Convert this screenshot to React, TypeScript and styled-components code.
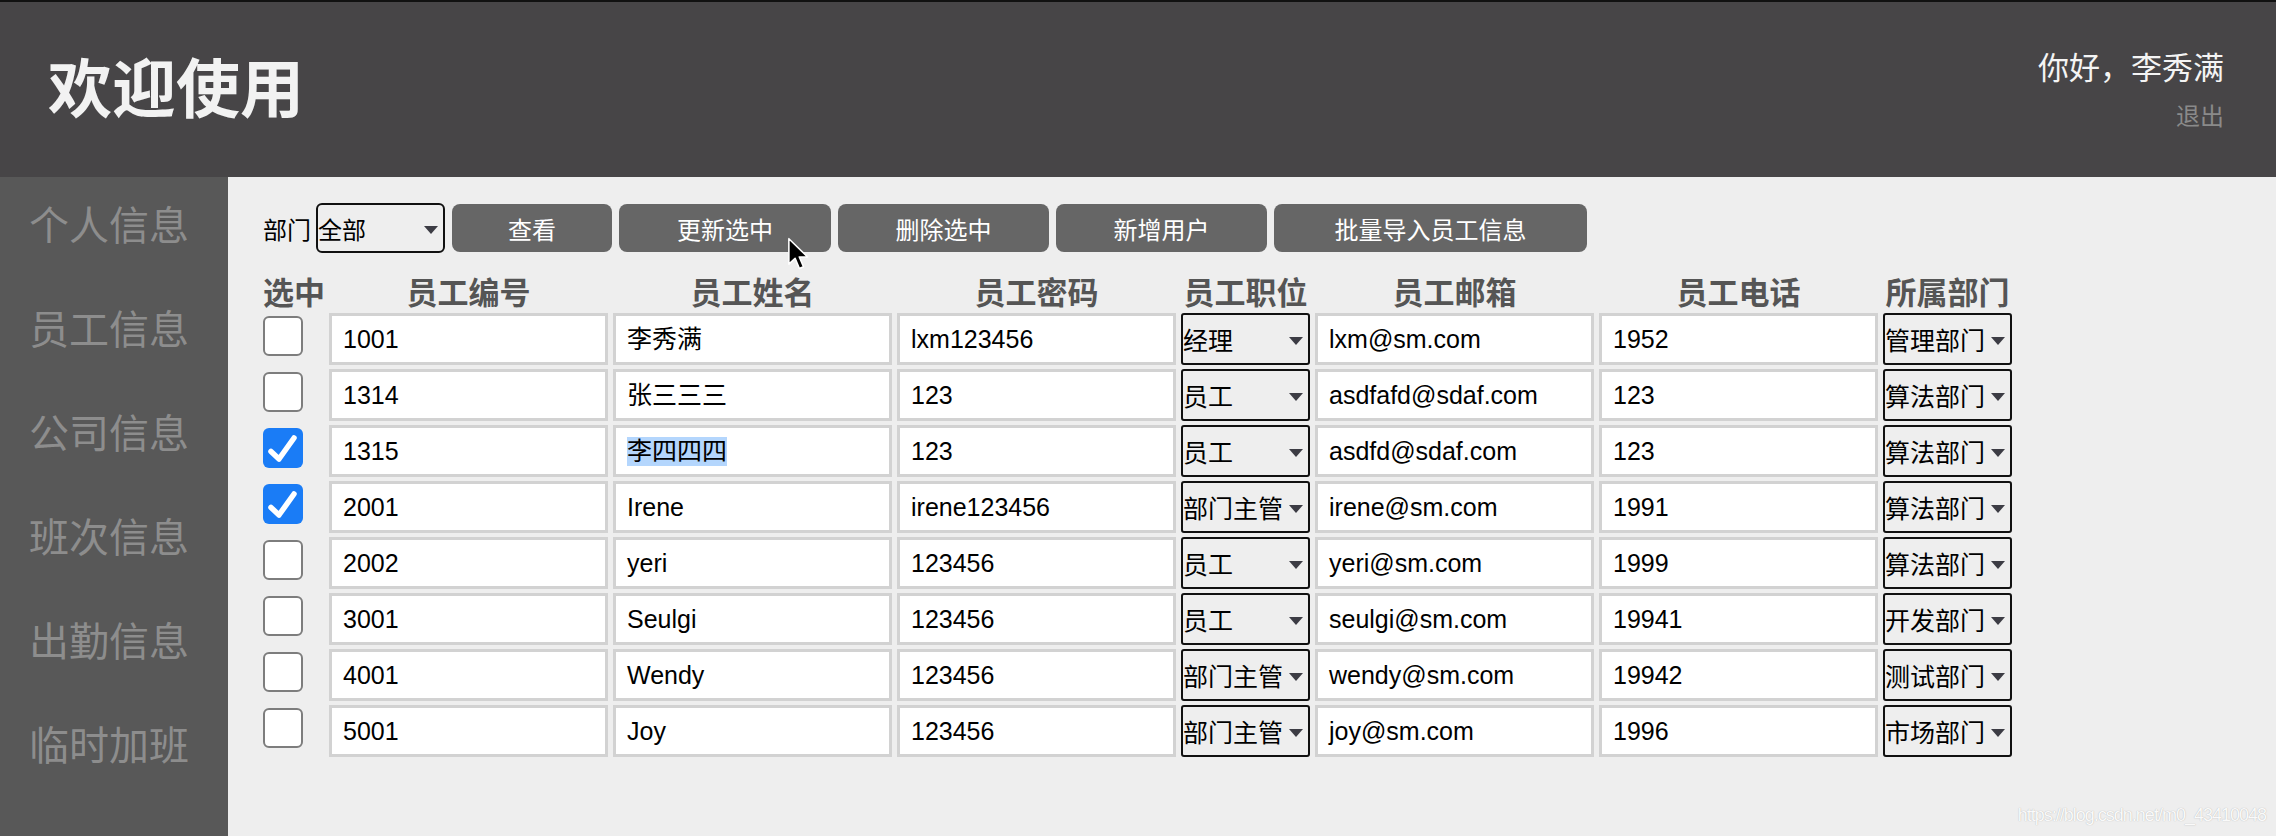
import React from 'react';
import styled, { createGlobalStyle } from 'styled-components';

const GlobalStyle = createGlobalStyle`
  html, body {
    margin: 0;
    padding: 0;
    background: #eeeeee;
  }

  body {
    font-family: "Liberation Sans", "Noto Sans CJK SC", sans-serif;
  }

  * {
    box-sizing: border-box;
  }
`;

const Page = styled.div`
  display: flex;
  flex-direction: column;
  min-height: 100vh;
`;

/* Top bar */
const Header = styled.header`
  height: 177px;
  flex-shrink: 0;
  display: flex;
  justify-content: space-between;
  align-items: flex-start;
  padding: 0 52px 0 48px;
  background: #474547;
  border-top: 2px solid #111111;
`;

const Title = styled.h1`
  margin: 0;
  padding-top: 46px;
  font-family: "Noto Sans CJK SC", sans-serif;
  font-size: 64px;
  font-weight: 700;
  line-height: 72px;
  color: #f2f2f2;
`;

const UserBox = styled.div`
  display: flex;
  flex-direction: column;
  align-items: flex-end;
  padding-top: 44px;
  font-family: "Noto Sans CJK SC", sans-serif;
`;

const Greeting = styled.div`
  font-size: 31px;
  line-height: 40px;
  color: #f4f4f4;
`;

const Logout = styled.a`
  margin-top: 14px;
  font-size: 24px;
  line-height: 30px;
  color: #8a8a8a;
  cursor: pointer;
`;

const Body = styled.div`
  flex: 1;
  display: flex;
`;

/* Left navigation */
const Sidebar = styled.nav`
  width: 228px;
  flex-shrink: 0;
  display: flex;
  flex-direction: column;
  gap: 12px;
  background: #585858;
`;

const NavItem = styled.div`
  height: 92px;
  padding-left: 29px;
  font-family: "Noto Sans CJK SC", sans-serif;
  font-size: 40px;
  line-height: 92px;
  color: #8d8d8d;
  cursor: pointer;
`;

const Content = styled.main`
  flex: 1;
  position: relative;
  padding: 26px 0 0 35px;
  background: #eeeeee;
`;

const Toolbar = styled.div`
  display: flex;
  align-items: center;
  gap: 7px;
  height: 50px;
`;

const Label = styled.span`
  margin-right: -2px;
  font-family: "Noto Sans CJK SC", sans-serif;
  font-size: 24px;
  color: #000000;
`;

const SelectWrap = styled.span<{ $w: number; $h: number }>`
  position: relative;
  display: block;
  width: ${(p) => p.$w}px;
  height: ${(p) => p.$h}px;

  &::after {
    content: '';
    position: absolute;
    right: 7px;
    top: 50%;
    margin-top: -2px;
    border-left: 7px solid transparent;
    border-right: 7px solid transparent;
    border-top: 8px solid #3c3c44;
    pointer-events: none;
  }
`;

const Select = styled.select<{ $radius: number; $size: number }>`
  appearance: none;
  width: 100%;
  height: 100%;
  margin: 0;
  padding: 0;
  border: 2px solid #111111;
  border-radius: ${(p) => p.$radius}px;
  background: #eeeeee;
  font-family: "Noto Sans CJK SC", sans-serif;
  font-size: ${(p) => p.$size}px;
  color: #000000;
  outline: none;
`;

const Button = styled.button<{ $w: number }>`
  width: ${(p) => p.$w}px;
  height: 48px;
  padding: 0;
  border: none;
  border-radius: 8px;
  background: #666666;
  font-family: "Noto Sans CJK SC", sans-serif;
  font-size: 24px;
  color: #ffffff;
  cursor: pointer;
`;

/* Employee table */
const Table = styled.div`
  display: grid;
  grid-template-columns: 61px 279px 279px 279px 129px 279px 279px 129px;
  grid-auto-rows: 52px;
  grid-template-rows: 36px;
  column-gap: 5px;
  row-gap: 4px;
  margin-top: 20px;
`;

const HeadCell = styled.div<{ $left?: boolean }>`
  font-family: "Noto Sans CJK SC", sans-serif;
  font-size: 31px;
  font-weight: 700;
  line-height: 36px;
  color: #555555;
  text-align: ${(p) => (p.$left ? 'left' : 'center')};
  white-space: nowrap;
`;

const CheckCell = styled.div`
  padding-top: 3px;
`;

const CheckBox = styled.span<{ $checked: boolean }>`
  display: flex;
  align-items: center;
  justify-content: center;
  width: 40px;
  height: 40px;
  border-radius: 6px;
  border: ${(p) => (p.$checked ? 'none' : '2px solid #7d7d7d')};
  background: ${(p) => (p.$checked ? '#1a7cf6' : '#ffffff')};
`;

const Field = styled.div`
  height: 52px;
  padding-left: 11px;
  border: 3px solid #d2d2d2;
  background: #ffffff;
  font-size: 25px;
  line-height: 46px;
  color: #000000;
  white-space: nowrap;
  overflow: hidden;
`;

const Highlight = styled.span`
  display: inline-block;
  line-height: 29px;
  background: #b4d6fd;
`;

const Watermark = styled.div`
  position: absolute;
  right: 10px;
  bottom: 10px;
  font-size: 18px;
  letter-spacing: -1px;
  color: #fafafa;
  text-shadow: 0 0 1px #a8a8a8;
`;

const Cursor = styled.svg`
  position: absolute;
  left: 559px;
  top: 60px;
  width: 23px;
  height: 34px;
`;

type Row = {
  checked: boolean;
  id: string;
  name: string;
  pwd: string;
  role: string;
  email: string;
  phone: string;
  dept: string;
  selected?: boolean;
};

const rows: Row[] = [
  { checked: false, id: '1001', name: '李秀满', pwd: 'lxm123456', role: '经理', email: 'lxm@sm.com', phone: '1952', dept: '管理部门' },
  { checked: false, id: '1314', name: '张三三三', pwd: '123', role: '员工', email: 'asdfafd@sdaf.com', phone: '123', dept: '算法部门' },
  { checked: true, id: '1315', name: '李四四四', pwd: '123', role: '员工', email: 'asdfd@sdaf.com', phone: '123', dept: '算法部门', selected: true },
  { checked: true, id: '2001', name: 'Irene', pwd: 'irene123456', role: '部门主管', email: 'irene@sm.com', phone: '1991', dept: '算法部门' },
  { checked: false, id: '2002', name: 'yeri', pwd: '123456', role: '员工', email: 'yeri@sm.com', phone: '1999', dept: '算法部门' },
  { checked: false, id: '3001', name: 'Seulgi', pwd: '123456', role: '员工', email: 'seulgi@sm.com', phone: '19941', dept: '开发部门' },
  { checked: false, id: '4001', name: 'Wendy', pwd: '123456', role: '部门主管', email: 'wendy@sm.com', phone: '19942', dept: '测试部门' },
  { checked: false, id: '5001', name: 'Joy', pwd: '123456', role: '部门主管', email: 'joy@sm.com', phone: '1996', dept: '市场部门' },
];

const roles = ['经理', '部门主管', '员工'];
const depts = ['管理部门', '算法部门', '开发部门', '测试部门', '市场部门'];
const navItems = ['个人信息', '员工信息', '公司信息', '班次信息', '出勤信息', '临时加班'];
const heads = ['员工编号', '员工姓名', '员工密码', '员工职位', '员工邮箱', '员工电话', '所属部门'];

const Check = () => (
  <svg width="40" height="40" viewBox="0 0 40 40">
    <path d="M8 23.5 L16 31 L31 10" fill="none" stroke="#ffffff" strokeWidth="5.5" strokeLinecap="round" strokeLinejoin="round" />
  </svg>
);

const CellSelect: React.FC<{ value: string; options: string[] }> = ({ value, options }) => (
  <SelectWrap $w={129} $h={52}>
    <Select $radius={3} $size={25} defaultValue={value}>
      {options.map((o) => (
        <option key={o}>{o}</option>
      ))}
    </Select>
  </SelectWrap>
);

const App: React.FC = () => {
  return (
    <Page>
      <GlobalStyle />
      <Header>
        <Title>欢迎使用</Title>
        <UserBox>
          <Greeting>你好，李秀满</Greeting>
          <Logout>退出</Logout>
        </UserBox>
      </Header>
      <Body>
        <Sidebar>
          {navItems.map((n) => (
            <NavItem key={n}>{n}</NavItem>
          ))}
        </Sidebar>
        <Content>
          <Toolbar>
            <Label>部门</Label>
            <SelectWrap $w={129} $h={50}>
              <Select $radius={6} $size={24} defaultValue="全部">
                <option>全部</option>
                {depts.map((d) => (
                  <option key={d}>{d}</option>
                ))}
              </Select>
            </SelectWrap>
            <Button $w={160}>查看</Button>
            <Button $w={212}>更新选中</Button>
            <Button $w={211}>删除选中</Button>
            <Button $w={211}>新增用户</Button>
            <Button $w={313}>批量导入员工信息</Button>
          </Toolbar>

          <Table>
            <HeadCell $left>选中</HeadCell>
            {heads.map((h) => (
              <HeadCell key={h}>{h}</HeadCell>
            ))}
            {rows.map((r) => (
              <React.Fragment key={r.id}>
                <CheckCell>
                  <CheckBox $checked={r.checked}>{r.checked && <Check />}</CheckBox>
                </CheckCell>
                <Field>{r.id}</Field>
                <Field>{r.selected ? <Highlight>{r.name}</Highlight> : r.name}</Field>
                <Field>{r.pwd}</Field>
                <CellSelect value={r.role} options={roles} />
                <Field>{r.email}</Field>
                <Field>{r.phone}</Field>
                <CellSelect value={r.dept} options={depts} />
              </React.Fragment>
            ))}
          </Table>

          <Cursor viewBox="0 0 20 30">
            <path d="M1.5 1.5 L1.5 24 L7 18.8 L10.8 27.8 L14.4 26.2 L10.7 17.6 L18 17.6 Z" fill="#000000" stroke="#ffffff" strokeWidth="1.4" strokeLinejoin="round" />
          </Cursor>
          <Watermark>https://blog.csdn.net/m0_43410048</Watermark>
        </Content>
      </Body>
    </Page>
  );
};

export default App;
